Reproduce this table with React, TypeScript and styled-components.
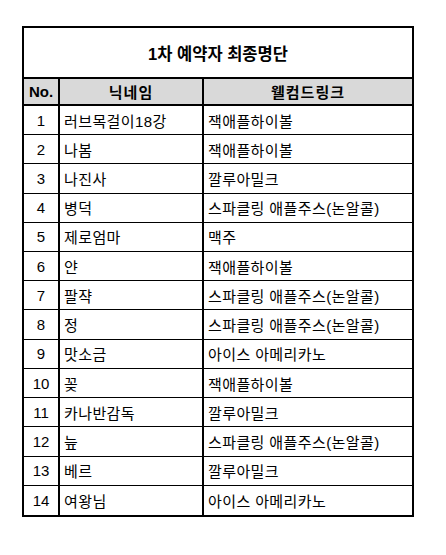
import styled, { createGlobalStyle } from 'styled-components'

const ROWS: [string, string][] = [
    ['러브목걸이18강', '잭애플하이볼'],
    ['나봄', '잭애플하이볼'],
    ['나진사', '깔루아밀크'],
    ['병덕', '스파클링 애플주스(논알콜)'],
    ['제로엄마', '맥주'],
    ['얀', '잭애플하이볼'],
    ['팔쟉', '스파클링 애플주스(논알콜)'],
    ['정', '스파클링 애플주스(논알콜)'],
    ['맛소금', '아이스 아메리카노'],
    ['꽂', '잭애플하이볼'],
    ['카나반감독', '깔루아밀크'],
    ['늪', '스파클링 애플주스(논알콜)'],
    ['베르', '깔루아밀크'],
    ['여왕님', '아이스 아메리카노'],
]

const GlobalStyle = createGlobalStyle`
    body {
        margin: 0;
        background: #ffffff;
        font-family: 'Liberation Sans', 'Noto Sans CJK KR', sans-serif;
        color: #000000;
    }
`

export default function App() {
    return (
        <>
            <GlobalStyle />
            <Page>
                <Sheet>
                    <Title>1차 예약자 최종명단</Title>
                    <HeadCell>No.</HeadCell>
                    <HeadCell spaced>닉네임</HeadCell>
                    <HeadCell spaced last>
                        웰컴드링크
                    </HeadCell>
                    {ROWS.map(([name, drink], i) => {
                        const isLast = i === ROWS.length - 1
                        return (
                            <Row key={i} isLast={isLast}>
                                <NumCell>{i + 1}</NumCell>
                                <TextCell>{name}</TextCell>
                                <TextCell last>{drink}</TextCell>
                            </Row>
                        )
                    })}
                </Sheet>
            </Page>
        </>
    )
}

const Page = styled.div`
    padding: 26px 0 0 22px;
`

const Sheet = styled.div`
    box-sizing: border-box;
    width: 392px;
    height: 491px;
    border: 2px solid #000;
    display: grid;
    grid-template-columns: 36px 144px 1fr;
    grid-template-rows: 51px 27px repeat(14, 1fr);
`

const Title = styled.div`
    grid-column: 1 / -1;
    border-bottom: 2px solid #000;
    display: flex;
    align-items: center;
    justify-content: center;
    font-weight: 700;
    font-size: 16.5px;
    padding-top: 1px;
`

const HeadCell = styled.div<{ last?: boolean; spaced?: boolean }>`
    box-sizing: border-box;
    background: #d9d9d9;
    border-bottom: 2px solid #000;
    border-right: ${({ last }) => (last ? 'none' : '2px solid #000')};
    display: flex;
    align-items: center;
    justify-content: center;
    font-weight: 700;
    font-size: 15px;
    letter-spacing: ${({ spaced }) => (spaced ? '1px' : '0')};
`

const Row = styled.div<{ isLast: boolean }>`
    display: contents;

    & > div {
        border-bottom: ${({ isLast }) => (isLast ? 'none' : '1px solid #000')};
    }
`

const NumCell = styled.div`
    box-sizing: border-box;
    border-right: 2px solid #000;
    display: flex;
    align-items: center;
    justify-content: center;
    font-size: 15px;
`

const TextCell = styled.div<{ last?: boolean }>`
    box-sizing: border-box;
    border-right: ${({ last }) => (last ? 'none' : '2px solid #000')};
    display: flex;
    align-items: center;
    padding-left: 4px;
    font-size: 15px;
    letter-spacing: 0.4px;
    white-space: nowrap;
`
